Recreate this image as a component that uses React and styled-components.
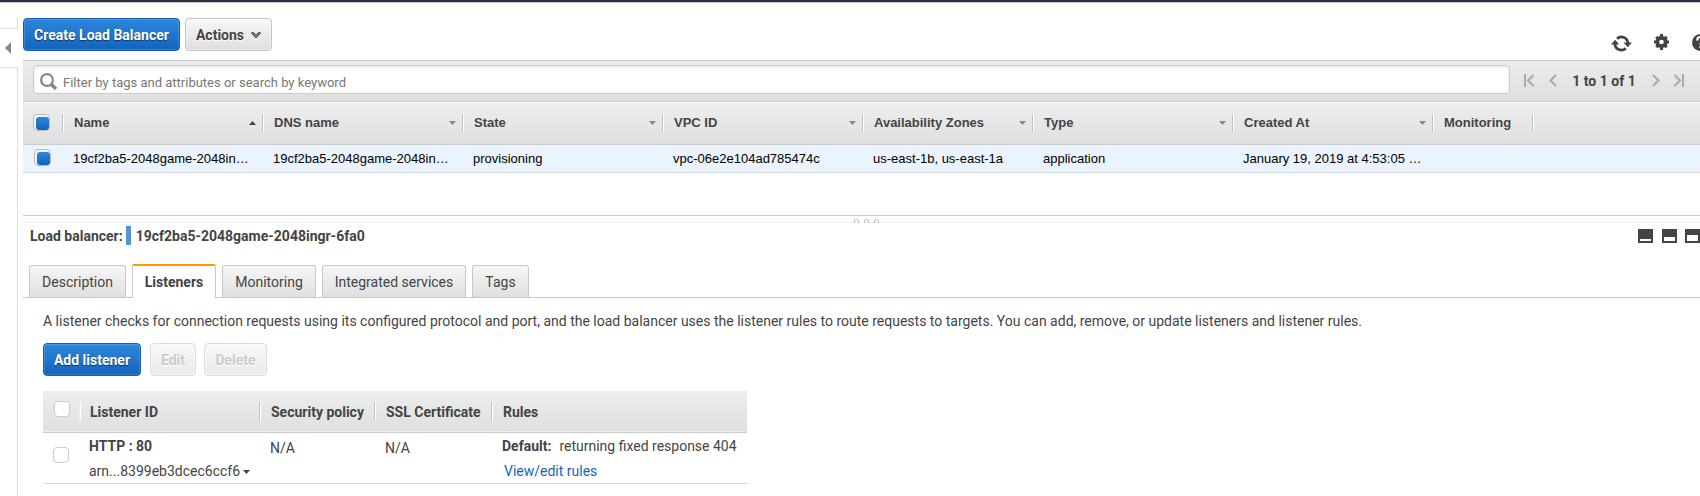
import React from "react";
import styled, { createGlobalStyle, css } from "styled-components";

const Global = createGlobalStyle`
  * { box-sizing: border-box; }
  body { margin: 0; background: #fff; overflow: hidden; }
  svg { display: block; flex: none; }
`;

const Page = styled.div`
  width: 1700px;
  height: 496px;
  overflow: hidden;
  display: flex;
  flex-direction: column;
  font-family: Roboto, "Liberation Sans", sans-serif;
  font-size: 14px;
  line-height: 20px;
  color: #444;
`;

const TopBar = styled.div`
  height: 3px;
  flex: none;
  background: #232f3e;
  border-bottom: 1px solid #ccc;
`;

const Body = styled.div`
  flex: 1;
  display: flex;
  min-height: 0;
`;

const Rail = styled.div`
  width: 23px;
  flex: none;
  padding-top: 15px;
  display: flex;
  flex-direction: column;
`;

const RailTop = styled.div`
  width: 18px;
  height: 11px;
  border: solid #ddd;
  border-width: 0 1px 1px 0;
`;

const RailHandle = styled.div`
  width: 18px;
  height: 38px;
  padding: 13px 0 0 5px;
`;

const RailBottom = styled.div`
  width: 18px;
  flex: 1;
  border: solid #ddd;
  border-width: 1px 1px 0 0;
`;

const Main = styled.div`
  width: 1677px;
  flex: none;
  display: flex;
  flex-direction: column;
`;

const Toolbar = styled.div`
  height: 57px;
  padding-top: 15px;
  display: flex;
  gap: 5px;
`;

const ToolIcons = styled.div`
  margin: 16px -12px 0 auto;
  display: flex;
  align-items: flex-start;
`;

const Button = styled.button`
  height: 33px;
  width: ${(p) => p.$w}px;
  flex: none;
  padding: 1px 0 0;
  display: flex;
  align-items: center;
  justify-content: center;
  gap: 7px;
  font: bold 14px Roboto, sans-serif;
  white-space: nowrap;
  border: 1px solid #c4c4c4;
  border-radius: 4px;
  color: #444;
  background: linear-gradient(#f7f7f7, #dfdfdf);
  box-shadow: inset 0 0 0 1px rgba(255, 255, 255, 0.35);
  text-shadow: 0 1px 0 #fff;
  ${(p) => p.$primary && css`
    color: #fff;
    border-color: #1460ae;
    background: linear-gradient(#2e87dd, #1263bc);
    box-shadow: inset 0 0 0 1px rgba(255, 255, 255, 0.14);
    text-shadow: 0 1px 1px rgba(0, 0, 0, 0.5);
  `}
  ${(p) => p.disabled && css`
    color: #ccc;
    border-color: #ddd;
    background: linear-gradient(#f7f7f7, #ebebeb);
  `}
`;

const FilterBar = styled.div`
  height: 42px;
  padding: 4px 0 0 10px;
  display: flex;
  border: solid #ccc;
  border-width: 1px 0;
  background: linear-gradient(#ececec, #dfdfdf);
`;

const SearchBox = styled.label`
  width: 1477px;
  height: 29px;
  padding-left: 6px;
  display: flex;
  align-items: center;
  gap: 5px;
  border: 1px solid #ccc;
  border-radius: 4px;
  background: #fff;
  box-shadow: inset 0 1px 3px rgba(0, 0, 0, 0.12);
`;

const SearchIcon = styled.svg`
  margin-top: 5px;
`;

const SearchInput = styled.input`
  width: 1000px;
  padding: 7px 0 0;
  border: 0;
  background: none;
  font: 13px Roboto, sans-serif;
  line-height: 18px;
  &::placeholder { color: #777; opacity: 1; }
`;

const Pager = styled.div`
  padding: 5px 0 0 14px;
  height: 29px;
  display: flex;
  align-items: flex-start;
  font-weight: bold;
`;

const PagerLabel = styled.span`
  width: 95px;
  padding-right: 1px;
  text-align: center;
  line-height: 22px;
`;

const PagerGap = styled.span`
  width: ${(p) => p.$w}px;
`;

const PagerArrow = styled.svg`
  margin-top: 4px;
  transform: ${(p) => (p.$flip ? "scaleX(-1)" : "none")};
`;

const columns = "40px 200px 200px 200px 200px 170px 200px 200px 100px 1fr";

const GridHead = styled.div`
  height: 43px;
  display: grid;
  grid-template-columns: ${columns};
  align-items: start;
  padding-top: 11px;
  border: solid #ccc;
  border-top-color: #fff;
  border-width: 1px 0;
  background: linear-gradient(#eee, #dfdfdf);
  font: bold 13px "Liberation Sans", sans-serif;
`;

const HeadCell = styled.div`
  height: 18px;
  padding: 0 6px 0 11px;
  display: flex;
  align-items: center;
  justify-content: space-between;
  line-height: 18px;
  border-right: 1px solid #c4c4c4;
  box-shadow: 1px 0 0 #fff;
`;

const CheckCell = styled(HeadCell)`
  align-items: flex-start;
  padding: 0 0 0 10px;
`;

const GridRow = styled.div`
  height: 28px;
  display: grid;
  grid-template-columns: ${columns};
  align-items: start;
  border-bottom: 1px solid #d9dde3;
  background: #eaf3fe;
  font: 13px "Liberation Sans", sans-serif;
  color: #000;
`;

const Cell = styled.div`
  padding: 0 8px 0 10px;
  line-height: 27px;
  overflow: hidden;
  text-overflow: ellipsis;
  white-space: nowrap;
  ${(p) => p.$check && css`padding: 4px 0 0 11px;`}
`;

const Check = styled.span`
  width: 16px;
  height: 16px;
  flex: none;
  display: block;
  border: 1px solid #ccc;
  border-radius: 4px;
  background: #fff;
  ${(p) => p.$on && css`
    width: 17px;
    height: 17px;
    padding: 2px 0 0 2px;
    border-color: #bbb;
    background: #f4f4f4;
    &::after {
      content: "";
      display: block;
      width: 13px;
      height: 13px;
      border-radius: 3px;
      background: linear-gradient(#2e87dd, #1263bc);
    }
  `}
`;

const Splitter = styled.div`
  margin-top: 42px;
  height: 8px;
  flex: none;
  border: solid #ccc;
  border-bottom-color: #eee;
  border-width: 1px 0;
  padding: 3px 0 0 831px;
`;

const DetailHead = styled.div`
  height: 38px;
  padding: 3px 0 0 7px;
  display: flex;
  font-weight: bold;
  line-height: 20px;
`;

const Marker = styled.span`
  width: 5px;
  height: 19px;
  flex: none;
  margin: 0 5px 0 3px;
  background: #5294cf;
`;

const Layouts = styled.div`
  margin: 3px 0 0 auto;
  display: flex;
  gap: 9px;
  & > :last-child { margin-left: -1px; }
`;

const LayoutButton = styled.span`
  width: 15px;
  height: 14px;
  background: #fff;
  border: solid #444;
  border-width: ${(p) => p.$top}px 2px 2px;
`;

const Tabs = styled.div`
  height: 37px;
  padding-left: 6px;
  display: flex;
  align-items: flex-end;
  gap: 6px;
  border-bottom: 1px solid #c8c8c8;
`;

const Tab = styled.div`
  width: ${(p) => p.$w}px;
  height: 32px;
  text-align: center;
  line-height: 32px;
  border: 1px solid #c8c8c8;
  border-bottom: 0;
  border-radius: 3px 3px 0 0;
  background: linear-gradient(#f7f7f7, #dfdfdf);
  ${(p) => p.$active && css`
    height: 34px;
    margin-bottom: -1px;
    font-weight: bold;
    border-top: 2px solid #f90;
    border-radius: 2px 2px 0 0;
    background: #fff;
  `}
`;

const Panel = styled.div`
  padding: 13px 0 0 20px;
`;

const Intro = styled.p`
  margin: 0;
  line-height: 20px;
  white-space: nowrap;
`;

const Actions = styled.div`
  margin: 12px 0 15px;
  display: flex;
  gap: 8px;
  & > :first-child { margin-right: 1px; }
`;

const Table = styled.div`
  width: 704px;
`;

const TableHead = styled.div`
  height: 42px;
  padding-top: 11px;
  display: grid;
  grid-template-columns: 37px 180px 115px 117px 1fr;
  background: linear-gradient(#ededed, #dfdfdf);
  border-bottom: 1px solid #ccc;
  box-shadow: inset 0 -1px 0 #eee;
  font-weight: bold;
`;

const TableHeadCell = styled.div`
  height: 19px;
  padding-left: ${(p) => p.$pad ?? 11}px;
  line-height: 20px;
  white-space: nowrap;
  border-right: 1px solid #c4c4c4;
  box-shadow: 1px 0 0 #fff;
  &:first-child { border-color: #eee; }
  &:first-child > span { margin-top: -1px; }
  &:last-child { border: 0; box-shadow: none; }
`;

const TableRow = styled.div`
  height: 51px;
  display: grid;
  grid-template-columns: 36px 180px 115px 117px 1fr;
  border-bottom: 1px solid #d9d9d9;
`;

const TableCell = styled.div`
  padding: ${(p) => p.$pad || "3px 0 0 10px"};
  white-space: nowrap;
`;

const Line = styled.div`
  height: 25px;
  line-height: 20px;
  display: flex;
  align-items: flex-start;
`;

const Link = styled.a`
  color: #1166bb;
  margin-left: 2px;
`;

const Gap = styled.span`
  width: 8px;
`;

const CaretSlot = styled.span`
  padding: 9px 0 0 3px;
`;

const Down = ({ color = "#888" }) => (
  <svg width="7" height="4" viewBox="0 0 7 4"><path d="M0 0H7L3.5 4Z" fill={color} /></svg>
);
const Up = () => (
  <svg width="7" height="4" viewBox="0 0 7 4"><path d="M0 4H7L3.5 0Z" fill="#444" /></svg>
);
const Arrow = ({ right, bar }) => (
  <PagerArrow $flip={right} width={bar ? 10 : 8} height="14" viewBox={bar ? "0 0 10 14" : "0 0 8 14"}
    fill="none" stroke="#aaa" strokeWidth="2">
    {bar && <path d="M1 0V13" />}
    <path d={bar ? "M9.5 1L4 6.5L9.5 12" : "M7 1L1.5 6.5L7 12"} />
  </PagerArrow>
);

const heads = ["Name", "DNS name", "State", "VPC ID", "Availability Zones", "Type", "Created At", "Monitoring"];
const row = [
  "19cf2ba5-2048game-2048in…", "19cf2ba5-2048game-2048in…", "provisioning",
  "vpc-06e2e104ad785474c", "us-east-1b, us-east-1a", "application", "January 19, 2019 at 4:53:05 …", "",
];

export default function App() {
  return (
    <Page>
      <Global />
      <TopBar />
      <Body>
        <Rail>
          <RailTop />
          <RailHandle>
            <svg width="6" height="12" viewBox="0 0 6 12"><path d="M6 0V12L0 6Z" fill="#888" /></svg>
          </RailHandle>
          <RailBottom />
        </Rail>
        <Main>
          <Toolbar>
            <Button $primary $w={157}>Create Load Balancer</Button>
            <Button $w={87}>
              Actions
              <svg width="10" height="7" viewBox="0 0 10 7"><path d="M.7 .6H2.600L5 3L7.400 .6H9.300V1.500L5 6L.7 1.500Z" fill="#888" stroke="#444" /></svg>
            </Button>
            <ToolIcons>
              <svg width="43" height="20" viewBox="0 0 43 20">
                <g fill="none" stroke="#444" strokeWidth="2.7">
                  <path d="M6 4.800A6.300 6.300 0 0 1 16.800 9.500" />
                  <path d="M4 9.500A6.300 6.300 0 0 0 14.800 14.200" />
                </g>
                <path d="M12.500 8.500H21L16.800 13.300Z M0 10.500H8.300L4 5.700Z" fill="#444" />
              </svg>
              <svg width="38" height="17" viewBox="0 0 38 17">
                <circle cx="7.5" cy="8" r="4.2" fill="none" stroke="#444" strokeWidth="3.8" />
                <path d="M7.5 0V3M7.5 13V16M0 8H3M12 8H15M2.3 2.8L4 4.5M11 11.5L12.7 13.2M12.7 2.8L11 4.5M2.3 13.2L4 11.5" stroke="#444" strokeWidth="3.2" />
              </svg>
              <svg width="20" height="18" viewBox="0 0 20 18">
                <circle cx="8.5" cy="8.5" r="8.5" fill="#444" />
                <path d="M5.5 6.5A3 3 0 1 1 9.5 8.7Q8.5 9.2 8.5 10.7M8.5 12V14" fill="none" stroke="#fff" strokeWidth="2.2" />
              </svg>
            </ToolIcons>
          </Toolbar>
          <FilterBar>
            <SearchBox>
              <SearchIcon width="18" height="18" viewBox="0 0 18 18" fill="none" stroke="#888">
                <circle cx="7" cy="7" r="5.9" strokeWidth="2.2" />
                <path d="M11 11L16 16" strokeWidth="3.6" />
              </SearchIcon>
              <SearchInput placeholder="Filter by tags and attributes or search by keyword" />
            </SearchBox>
            <Pager>
              <Arrow bar /><PagerGap $w={15} /><Arrow />
              <PagerLabel>1 to 1 of 1</PagerLabel>
              <Arrow right /><PagerGap $w={14} /><Arrow right bar />
            </Pager>
          </FilterBar>
          <GridHead>
            <CheckCell><Check $on /></CheckCell>
            {heads.map((h, i) => (
              <HeadCell key={h}>{h}{i === 0 ? <Up /> : i < 7 && <Down />}</HeadCell>
            ))}
          </GridHead>
          <GridRow>
            <Cell $check><Check $on /></Cell>
            {row.map((c, i) => <Cell key={i}>{c}</Cell>)}
          </GridRow>
          <Splitter>
            <svg width="26" height="4" viewBox="0 0 26 4" fill="none" stroke="#bbb">
              <path d="M.5 4V2Q.5 .5 2.5 .5T4.500 2V4M10.500 4V2Q10.500 .5 12.500 .5T14.500 2V4M20.500 4V2Q20.500 .5 22.500 .5T24.500 2V4" />
            </svg>
          </Splitter>
          <DetailHead>
            Load balancer: <Marker />19cf2ba5-2048game-2048ingr-6fa0
            <Layouts><LayoutButton $top={10} /><LayoutButton $top={8} /><LayoutButton $top={6} /></Layouts>
          </DetailHead>
          <Tabs>
            <Tab $w={97}>Description</Tab>
            <Tab $w={84} $active>Listeners</Tab>
            <Tab $w={94}>Monitoring</Tab>
            <Tab $w={144}>Integrated services</Tab>
            <Tab $w={57}>Tags</Tab>
          </Tabs>
          <Panel>
            <Intro>A listener checks for connection requests using its configured protocol and port, and the load balancer uses the listener rules to route requests to targets. You can add, remove, or update listeners and listener rules.</Intro>
            <Actions>
              <Button $primary $w={98}>Add listener</Button>
              <Button disabled $w={46}>Edit</Button>
              <Button disabled $w={63}>Delete</Button>
            </Actions>
            <Table>
              <TableHead>
                <TableHeadCell><Check /></TableHeadCell>
                <TableHeadCell $pad={10}>Listener ID</TableHeadCell>
                <TableHeadCell>Security policy</TableHeadCell>
                <TableHeadCell>SSL Certificate</TableHeadCell>
                <TableHeadCell>Rules</TableHeadCell>
              </TableHead>
              <TableRow>
                <TableCell $pad="14px 0 0 10px"><Check /></TableCell>
                <TableCell>
                  <Line><b>HTTP : 80</b></Line>
                  <Line>arn...8399eb3dcec6ccf6<CaretSlot><Down color="#444" /></CaretSlot></Line>
                </TableCell>
                <TableCell $pad="5px 0 0 11px">N/A</TableCell>
                <TableCell $pad="5px 0 0 11px">N/A</TableCell>
                <TableCell $pad="3px 0 0 11px">
                  <Line><b>Default:</b><Gap />returning fixed response 404</Line>
                  <Line><Link>View/edit rules</Link></Line>
                </TableCell>
              </TableRow>
            </Table>
          </Panel>
        </Main>
      </Body>
    </Page>
  );
}
